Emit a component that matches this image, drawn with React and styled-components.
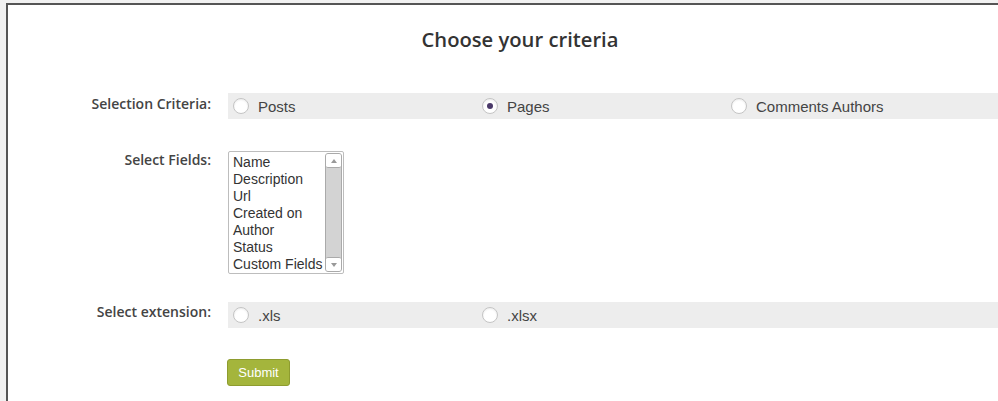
import React, { useState } from "react";
import styled, { createGlobalStyle } from "styled-components";

const GlobalStyle = createGlobalStyle`
  html, body {
    margin: 0;
    padding: 0;
    background: #f1f1f1;
    overflow: hidden;
  }
`;

const Panel = styled.div`
  box-sizing: border-box;
  margin: 3px 0 0 6px;
  width: 1026px;
  height: calc(100vh - 3px);
  overflow: hidden;
  background: #fff;
  border-top: 2px solid #555;
  border-left: 2px solid #555;
  font-family: "Open Sans", "Liberation Sans", sans-serif;
`;

const Title = styled.h2`
  margin: 0;
  padding-top: 21px;
  text-align: center;
  font-size: 20.2px;
  line-height: 27px;
  font-weight: 600;
  color: #333;
`;

const Form = styled.form`
  display: grid;
  grid-template-columns: 203px 1fr;
  column-gap: 17px;
  margin-top: 40px;
`;

const Label = styled.div`
  text-align: right;
  font-size: 14px;
  font-weight: 600;
  color: #444;
  line-height: 18px;
  padding-top: ${(p) => p.$top || 0}px;
  margin-bottom: ${(p) => p.$gap || 0}px;
`;

const Field = styled.div`
  margin-bottom: ${(p) => p.$gap || 0}px;
`;

const Bar = styled.div`
  display: grid;
  grid-template-columns: repeat(3, 249px);
  height: 26px;
  background: #ededed;
`;

const Choice = styled.label`
  display: flex;
  align-items: center;
  gap: 9px;
  padding-left: 5px;
  font-family: "Liberation Sans", Arial, sans-serif;
  font-size: 15px;
  color: #444;
  cursor: pointer;
`;

const Radio = styled.input.attrs({ type: "radio" })`
  appearance: none;
  margin: 0;
  width: 16px;
  height: 16px;
  border-radius: 50%;
  border: 1px solid #c4c4c4;
  background: #fff;
  box-shadow: inset 0 1px 2px rgba(0, 0, 0, 0.08);
  display: grid;
  place-items: center;

  &:checked::before {
    content: "";
    width: 6px;
    height: 6px;
    border-radius: 50%;
    background: #4b3a6a;
  }
`;

const ListBox = styled.div`
  display: flex;
  width: 114px;
  height: 121px;
  border: 1px solid #bdbdbd;
  border-radius: 2px;
  background: #fff;
  overflow: hidden;
`;

const Options = styled.ul`
  flex: 1;
  list-style: none;
  margin: 0;
  padding: 2px 0 0 4px;
  font-family: "Liberation Sans", Arial, sans-serif;
  font-size: 14px;
  line-height: 17px;
  color: #333;
  white-space: nowrap;
`;

const Scrollbar = styled.div`
  width: 15px;
  margin: 1px 1px 1px 0;
  display: flex;
  flex-direction: column;
  background: #d3d3d3;
  border: 1px solid #aaa;
  border-radius: 3px;
`;

const Arrow = styled.div`
  height: 13px;
  background: #fff;
  display: grid;
  place-items: center;
  border-radius: 2px;
  ${(p) => (p.$down ? "margin-top: auto; border-top: 1px solid #aaa;" : "border-bottom: 1px solid #aaa;")}

  &::before {
    content: "";
    border-left: 3.5px solid transparent;
    border-right: 3.5px solid transparent;
    ${(p) => (p.$down ? "border-top: 4px solid #999;" : "border-bottom: 4px solid #999;")}
  }
`;

const SubmitButton = styled.button`
  width: 63px;
  height: 27px;
  margin-left: -1px;
  background: #a4b53c;
  border: 1px solid #8e9c2f;
  border-radius: 3px;
  color: #fff;
  font-family: "Liberation Sans", Arial, sans-serif;
  font-size: 13px;
  cursor: pointer;
`;

const criteria = ["Posts", "Pages", "Comments Authors"];
const fields = ["Name", "Description", "Url", "Created on", "Author", "Status", "Custom Fields"];
const extensions = [".xls", ".xlsx"];

export default function App() {
  const [criterion, setCriterion] = useState("Pages");
  const [extension, setExtension] = useState("");

  return (
    <>
      <GlobalStyle />
      <Panel>
        <Title>Choose your criteria</Title>
        <Form onSubmit={(e) => e.preventDefault()}>
          <Label $top={2} $gap={32}>Selection Criteria:</Label>
          <Field $gap={32}>
            <Bar>
              {criteria.map((c) => (
                <Choice key={c}>
                  <Radio name="criteria" checked={criterion === c} onChange={() => setCriterion(c)} />
                  {c}
                </Choice>
              ))}
            </Bar>
          </Field>

          <Label $top={0} $gap={28}>Select Fields:</Label>
          <Field $gap={28}>
            <ListBox>
              <Options>
                {fields.map((f) => (
                  <li key={f}>{f}</li>
                ))}
              </Options>
              <Scrollbar>
                <Arrow />
                <Arrow $down />
              </Scrollbar>
            </ListBox>
          </Field>

          <Label $top={1} $gap={31}>Select extension:</Label>
          <Field $gap={31}>
            <Bar>
              {extensions.map((x) => (
                <Choice key={x}>
                  <Radio name="extension" checked={extension === x} onChange={() => setExtension(x)} />
                  {x}
                </Choice>
              ))}
            </Bar>
          </Field>

          <div />
          <div>
            <SubmitButton type="submit">Submit</SubmitButton>
          </div>
        </Form>
      </Panel>
    </>
  );
}
